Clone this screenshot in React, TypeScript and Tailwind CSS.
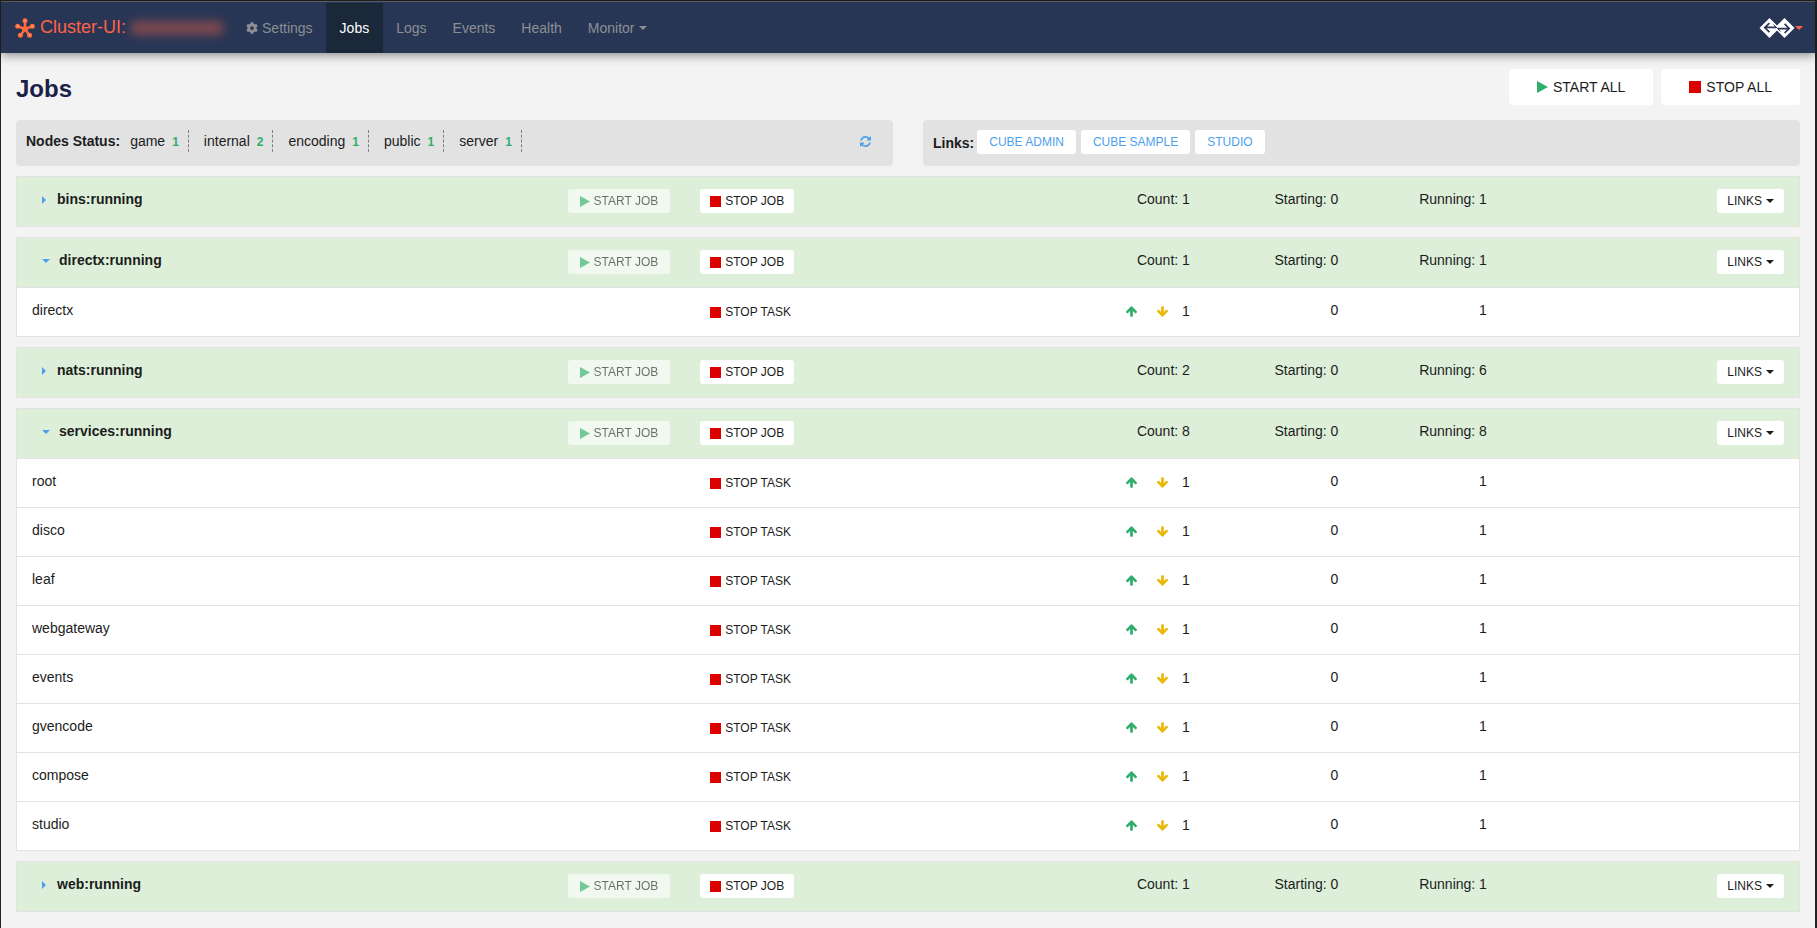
import { FaCog } from "react-icons/fa";

type Task = {
    name: string;
    count: number;
    starting: number;
    running: number;
};

type Job = {
    name: string;
    count: number;
    starting: number;
    running: number;
    tasks?: Task[];
};

const task = (name: string): Task => ({ name, count: 1, starting: 0, running: 1 });

const jobs: Job[] = [
    { name: "bins", count: 1, starting: 0, running: 1 },
    { name: "directx", count: 1, starting: 0, running: 1, tasks: [task("directx")] },
    { name: "nats", count: 2, starting: 0, running: 6 },
    {
        name: "services",
        count: 8,
        starting: 0,
        running: 8,
        tasks: [
            task("root"),
            task("disco"),
            task("leaf"),
            task("webgateway"),
            task("events"),
            task("gvencode"),
            task("compose"),
            task("studio"),
        ],
    },
    { name: "web", count: 1, starting: 0, running: 1 },
];

const nodes = [
    { name: "game", count: 1 },
    { name: "internal", count: 2 },
    { name: "encoding", count: 1 },
    { name: "public", count: 1 },
    { name: "server", count: 1 },
];

const links = ["CUBE ADMIN", "CUBE SAMPLE", "STUDIO"];

function ClusterLogo() {
    return (
        <svg viewBox="0 0 20 20" className="h-5 w-5" aria-hidden="true">
            <path
                d="M10 11V3M10 11L2.8 8.4M10 11l7.2-2.6M10 11l-4.4 6.2M10 11l4.4 6.2"
                stroke="#ff6a3d"
                strokeWidth="2.4"
            />
            <g fill="#ff6a3d">
                <circle cx="10" cy="11" r="3" />
                <circle cx="10" cy="2.8" r="2.5" />
                <circle cx="2.7" cy="8.2" r="2.5" />
                <circle cx="17.3" cy="8.2" r="2.5" />
                <circle cx="5.4" cy="17.2" r="2.5" />
                <circle cx="14.6" cy="17.2" r="2.5" />
            </g>
            <g fill="#ff9a72">
                <circle cx="10" cy="2.8" r="1.1" />
                <circle cx="2.7" cy="8.2" r="1.1" />
                <circle cx="17.3" cy="8.2" r="1.1" />
                <circle cx="5.4" cy="17.2" r="1.1" />
                <circle cx="14.6" cy="17.2" r="1.1" />
            </g>
        </svg>
    );
}

function BrandMark() {
    return (
        <svg viewBox="0 0 36 20" className="h-5 w-9" fill="none" aria-hidden="true">
            <path d="M10.500 0L20.500 10l-10 10L.5 10z" fill="#fff" />
            <path d="M25.500 0l10 10l-10 10l-10-10z" fill="#fff" />
            <path
                d="M10.400 5.200L5.800 9.600l4.600 4.600M6.200 9.300H17M25.600 5.800l4.600 4.600l-4.600 4.600M29.800 10.700H19"
                stroke="#283655"
                strokeWidth="1.700"
            />
            <path d="M14.500 6.600L21.500 13.400" stroke="#283655" strokeWidth="1" />
        </svg>
    );
}

function RefreshIcon() {
    return (
        <svg viewBox="0 0 1536 1536" className="h-[11px] w-[11px]" fill="currentColor" aria-hidden="true">
            <path d="M1511 928q0 5-1 7-64 268-268 434.500T764 1536q-146 0-282.500-55T238 1324l-129 129q-19 19-45 19t-45-19-19-45V960q0-26 19-45t45-19h448q26 0 45 19t19 45-19 45l-137 137q71 66 161 102t187 36q134 0 250-65t186-179q11-17 53-117 8-23 30-23h192q13 0 22.500 9.500t9.500 22.500zm25-800v448q0 26-19 45t-45 19h-448q-26 0-45-19t-19-45 19-45l138-138Q969 256 768 256q-134 0-250 65T332 500q-11 17-53 117-8 23-30 23H50q-13 0-22.500-9.500T18 608v-7q65-268 270-434.500T768 0q146 0 284 55.500T1297 212l130-129q19-19 45-19t45 19 19 45z" />
        </svg>
    );
}

function ArrowIcon({ className = "" }: { className?: string }) {
    return (
        <svg viewBox="53 192 1558 1472" className={`h-[11px] w-[11px] ${className}`} fill="currentColor" aria-hidden="true">
            <path d="M1611 971q0 51-37 90l-75 75q-38 38-91 38-54 0-90-38L1024 843v704q0 52-37.500 84.500T896 1664H768q-53 0-90.500-32.500T640 1547V843l-294 293q-36 38-90 38t-90-38l-75-75q-38-38-38-90 0-53 38-91L742 229q35-37 90-37 54 0 91 37l651 651q37 39 37 91z" />
        </svg>
    );
}

function PlayIcon({ className }: { className: string }) {
    return (
        <svg viewBox="0 0 12 12" className={className} fill="#2fae6b" preserveAspectRatio="none" aria-hidden="true">
            <path d="M0 0l12 6L0 12z" />
        </svg>
    );
}

function StopIcon({ className }: { className: string }) {
    return (
        <svg viewBox="0 0 12 12" className={className} fill="#dc0000" aria-hidden="true">
            <path d="M0 0h12v12H0z" />
        </svg>
    );
}

function Caret({ className = "" }: { className?: string }) {
    return (
        <svg viewBox="0 0 8 4" className={`h-1 w-2 ${className}`} fill="currentColor" aria-hidden="true">
            <path d="M0 0h8L4 4z" />
        </svg>
    );
}

function Navbar() {
    const item = "flex h-[50px] items-center px-[13px] text-[#8d8f94]";

    return (
        <nav className="flex items-center justify-between border-t border-[#5a5c61] bg-[#283655] pt-px shadow-[0_2px_10px_rgba(0,0,0,0.45)]">
            <div className="flex items-center">
                <a href="#" className="flex items-center gap-[5px] pl-[14px] pr-[10px] text-lg text-[#ff6347]">
                    <ClusterLogo />
                    <span className="pb-0.5">Cluster-UI:</span>
                    <span className="h-[14px] w-[92px] rounded bg-[#ff6347]/40 blur-[5px]" />
                </a>
                <a href="#settings" className={item}>
                    <FaCog className="mr-1 h-3 w-3" />
                    Settings
                </a>
                <a href="#jobs" className="flex h-[50px] items-center bg-[#1a2839] px-[14px] text-white">
                    Jobs
                </a>
                <a href="#logs" className={item}>Logs</a>
                <a href="#events" className={item}>Events</a>
                <a href="#health" className={item}>Health</a>
                <button type="button" className={item}>
                    Monitor
                    <Caret className="ml-1" />
                </button>
            </div>
            <button type="button" aria-label="Account" className="flex items-center pr-3 text-[#ff6347]">
                <BrandMark />
                <Caret />
            </button>
        </nav>
    );
}

function TaskRow({ item }: { item: Task }) {
    return (
        <tr className="border-t border-[#e2e2e2] bg-white align-top">
            <td className="px-[15px] pt-3">{item.name}</td>
            <td />
            <td className="px-[15px] py-3">
                <button type="button" className="flex h-6 items-center gap-1 px-[10px] text-xs">
                    <StopIcon className="h-[11px] w-[11px]" />
                    STOP TASK
                </button>
            </td>
            <td className="px-[15px] pt-[13px]">
                <div className="flex items-center justify-end">
                    <button type="button" aria-label="Scale up" className="px-[10px] text-[#2fae6b]">
                        <ArrowIcon />
                    </button>
                    <button type="button" aria-label="Scale down" className="px-[10px] text-[#eab808]">
                        <ArrowIcon className="rotate-180" />
                    </button>
                    <span className="pl-1">{item.count}</span>
                </div>
            </td>
            <td className="px-[15px] pt-3 text-right">{item.starting}</td>
            <td className="px-[15px] pt-3 text-right">{item.running}</td>
            <td />
        </tr>
    );
}

function JobPanel({ job }: { job: Job }) {
    return (
        <section className="border border-[#e2e2e2]">
            <table className="w-full table-fixed">
                <colgroup>
                    <col className="w-[30%]" />
                    <col className="w-[7.5%]" />
                    <col className="w-[20.83%]" />
                    <col className="w-[8.33%]" />
                    <col className="w-[8.33%]" />
                    <col className="w-[8.34%]" />
                    <col />
                </colgroup>
                <tbody>
                    <tr className="bg-[#ddefd8] align-top">
                        <th scope="row" className="px-[15px] pt-3 text-left">
                            <button type="button" className="flex items-center px-[10px] font-bold">
                                {job.tasks ? (
                                    <Caret className="mt-0.5 mr-[9px] text-[#4d9fec]" />
                                ) : (
                                    <svg viewBox="0 0 4 8" className="mt-0.5 mr-[11px] h-2 w-1 fill-[#4d9fec]" aria-hidden="true">
                                        <path d="M0 0l4 4l-4 4z" />
                                    </svg>
                                )}
                                {job.name}:running
                            </button>
                        </th>
                        <td className="pt-3 pr-[15px]">
                            <button
                                type="button"
                                disabled
                                className="ml-auto flex h-6 items-center gap-1 rounded-[3px] bg-white px-3 text-xs whitespace-nowrap opacity-60"
                            >
                                <PlayIcon className="h-[11px] w-[10px]" />
                                START JOB
                            </button>
                        </td>
                        <td className="px-[15px] pt-3 pb-[13px]">
                            <button type="button" className="flex h-6 items-center gap-1 rounded-[3px] bg-white px-[10px] text-xs">
                                <StopIcon className="h-[11px] w-[11px]" />
                                STOP JOB
                            </button>
                        </td>
                        <td className="px-[15px] pt-3 text-right">Count: {job.count}</td>
                        <td className="px-[15px] pt-3 text-right">Starting: {job.starting}</td>
                        <td className="px-[15px] pt-3 text-right">Running: {job.running}</td>
                        <td className="px-[15px] pt-3">
                            <button type="button" className="ml-auto flex h-6 items-center gap-1 rounded-[3px] bg-white px-[10px] text-xs">
                                LINKS
                                <Caret />
                            </button>
                        </td>
                    </tr>
                    {job.tasks?.map((item) => (
                        <TaskRow key={item.name} item={item} />
                    ))}
                </tbody>
            </table>
        </section>
    );
}

export default function App() {
    return (
        <div className="min-h-screen border-t border-r-2 border-l border-[#232323] bg-[#f3f3f3] font-['Liberation_Sans',Arial,sans-serif] text-sm text-[#1c1c1c]">
            <Navbar />
            <main className="px-[15px] pt-4 pb-4">
                <header className="flex items-center justify-between">
                    <h1 className="pt-1 text-2xl leading-8 font-bold text-[#1a2046]">Jobs</h1>
                    <div className="flex gap-2">
                        <button type="button" className="flex h-9 items-center gap-[5px] rounded-[3px] bg-white px-7">
                            <PlayIcon className="h-3 w-[11px]" />
                            START ALL
                        </button>
                        <button type="button" className="flex h-9 items-center gap-[5px] rounded-[3px] bg-white px-7">
                            <StopIcon className="h-3 w-3" />
                            STOP ALL
                        </button>
                    </div>
                </header>

                <div className="mt-[15px] grid grid-cols-2 gap-[30px]">
                    <section className="flex h-[46px] items-start rounded-[4px] bg-[#e2e2e2] px-[10px] pt-[10px]">
                        <strong className="mr-[10px] leading-[22px]">Nodes Status:</strong>
                        <ul className="flex gap-[15px]">
                            {nodes.map((node) => (
                                <li
                                    key={node.name}
                                    className="flex h-[22px] items-center border-r border-dashed border-[#808080] pr-[9px]"
                                >
                                    {node.name}
                                    <span className="ml-[7px] pt-px text-xs font-bold text-[#2fae6b]">{node.count}</span>
                                </li>
                            ))}
                        </ul>
                        <button type="button" aria-label="Refresh" className="mt-[6px] mr-3 ml-auto text-[#4d9fec]">
                            <RefreshIcon />
                        </button>
                    </section>
                    <section className="flex h-[46px] items-start rounded-[4px] bg-[#e2e2e2] px-[10px] pt-[10px]">
                        <strong className="mr-[3px] leading-[26px]">Links:</strong>
                        <div className="flex gap-[5px]">
                            {links.map((link) => (
                                <a
                                    key={link}
                                    href="#"
                                    className="flex h-6 items-center rounded-[3px] bg-white px-3 text-xs text-[#4d9fec]"
                                >
                                    {link}
                                </a>
                            ))}
                        </div>
                    </section>
                </div>

                <div className="mt-[10px] flex flex-col gap-[10px]">
                    {jobs.map((job) => (
                        <JobPanel key={job.name} job={job} />
                    ))}
                </div>
            </main>
        </div>
    );
}
